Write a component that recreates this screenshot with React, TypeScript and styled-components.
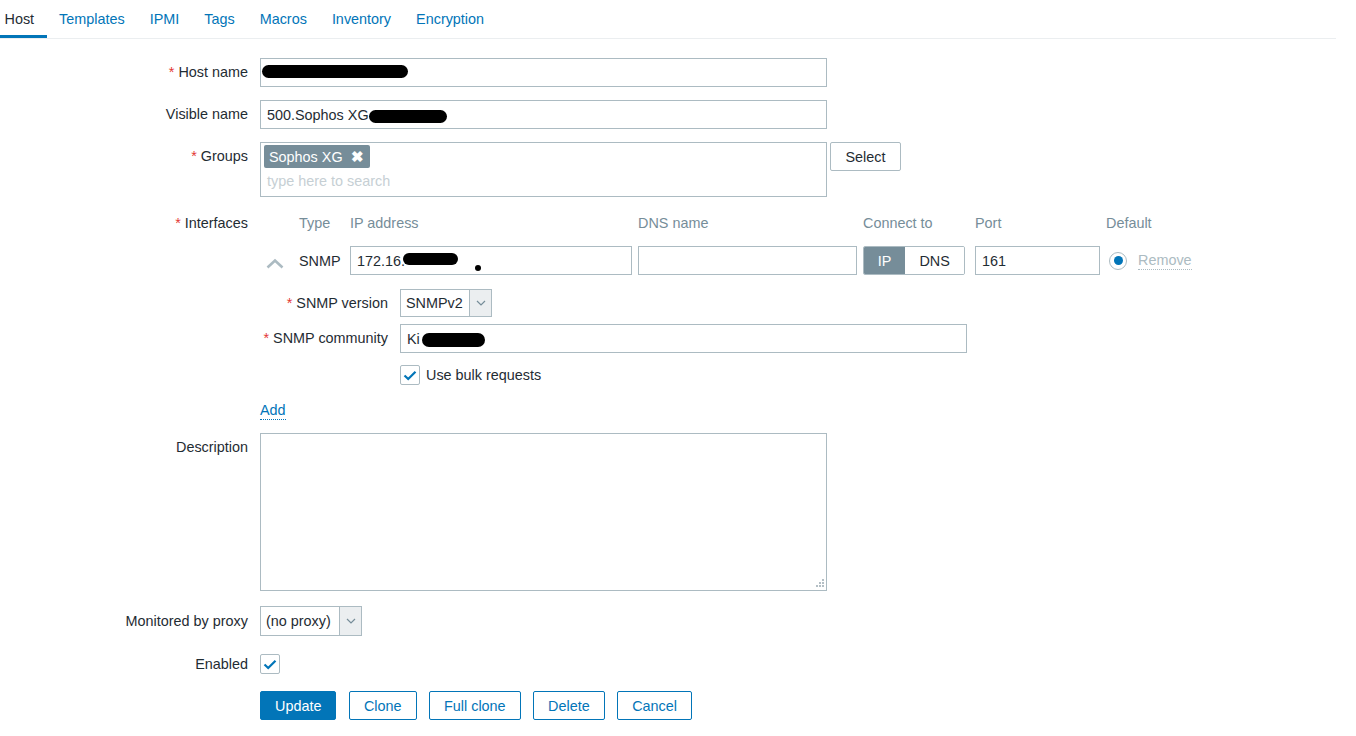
import React from "react";
import styled, { createGlobalStyle, css } from "styled-components";

const GlobalStyle = createGlobalStyle`
  html, body { margin: 0; padding: 0; background: #ffffff; }
  body {
    font-family: "Liberation Sans", Arial, sans-serif;
    font-size: 14.4px;
    color: #1f2c33;
  }
  * { box-sizing: border-box; }
`;

const Page = styled.div`
  width: 1356px;
  padding-right: 20px;
`;

const TabBar = styled.nav`
  display: flex;
  height: 39px;
  border-bottom: 1px solid #ebeef0;
  overflow: hidden;
`;

const TabList = styled.div`
  display: flex;
  margin-left: -8px;
`;

const Tab = styled.a<{ $active?: boolean }>`
  display: flex;
  align-items: center;
  height: 38px;
  padding: 0 12.5px;
  color: ${(p) => (p.$active ? "#1f2c33" : "#0275b8")};
  text-decoration: none;
  position: relative;
  cursor: pointer;
  ${(p) =>
    p.$active &&
    css`
      border-bottom: 3px solid #0275b8;
      padding-top: 3px;
    `}
`;

const Form = styled.div`
  display: flex;
  flex-direction: column;
  padding-top: 19px;
`;

const Row = styled.div<{ $mb?: number }>`
  display: grid;
  grid-template-columns: 248px 1fr;
  column-gap: 12px;
  margin-bottom: ${(p) => p.$mb ?? 0}px;
`;

const Label = styled.div<{ $lh?: number }>`
  text-align: right;
  line-height: ${(p) => p.$lh ?? 29}px;
  white-space: nowrap;
`;

const Req = styled.span`
  color: #e33734;
  margin-right: 4px;
`;

const Field = styled.div`
  display: flex;
  align-items: flex-start;
`;

const Redactable = styled.div`
  position: relative;
  display: inline-block;
`;

const Blob = styled.span`
  position: absolute;
  background: #000;
  border-radius: 8px;
  pointer-events: none;
`;

const TextInput = styled.input<{ $w: number; $h?: number }>`
  width: ${(p) => p.$w}px;
  height: ${(p) => p.$h ?? 29}px;
  border: 1px solid #acbbc2;
  border-radius: 0;
  padding: 0 6px;
  font: inherit;
  color: #1f2c33;
  background: #fff;
  outline: none;
  display: block;
`;

const MultiSelect = styled.div`
  width: 567px;
  height: 55px;
  border: 1px solid #acbbc2;
  padding: 2px 3px;
  display: flex;
  flex-direction: column;
  gap: 2px;
`;

const Chip = styled.span`
  display: inline-flex;
  align-items: center;
  align-self: flex-start;
  height: 23px;
  background: #768d99;
  color: #fff;
  border-radius: 2px;
  padding: 0 6px 0 5px;
  gap: 8px;
`;

const ChipX = styled.span`
  font-weight: bold;
  font-size: 15px;
  line-height: 1;
`;

const Placeholder = styled.span`
  color: #c6cfd4;
  padding-left: 3px;
  line-height: 23px;
`;

const PlainButton = styled.button<{ $w: number }>`
  width: ${(p) => p.$w}px;
  height: 29px;
  border: 1px solid #acbbc2;
  border-radius: 2px;
  background: #fff;
  font: inherit;
  color: #1f2c33;
  margin-left: 3px;
  padding: 0;
`;

const IfaceWrap = styled.div`
  display: flex;
  flex-direction: column;
`;

const IfaceGrid = styled.div`
  display: grid;
  grid-template-columns: 39px 51px 288px 225px 112px 131px 1fr;
  grid-template-rows: 22px 29px;
  row-gap: 12px;
  align-items: center;
`;

const Head = styled.div`
  color: #768d99;
  line-height: 22px;
`;

const CaretCell = styled.div`
  display: flex;
  padding-left: 6px;
  padding-top: 5px;
`;

const Segmented = styled.div`
  display: flex;
  width: 102px;
  height: 29px;
  border: 1px solid #acbbc2;
  border-radius: 2px;
  overflow: hidden;
`;

const Segment = styled.span<{ $active?: boolean; $w: number }>`
  width: ${(p) => p.$w}px;
  display: flex;
  align-items: center;
  justify-content: center;
  background: ${(p) => (p.$active ? "#768d99" : "#fff")};
  color: ${(p) => (p.$active ? "#fff" : "#1f2c33")};
`;

const DefaultCell = styled.div`
  display: flex;
  align-items: center;
  padding-left: 3px;
  gap: 11px;
`;

const Radio = styled.span`
  width: 18px;
  height: 18px;
  border-radius: 50%;
  border: 1px solid #acbbc2;
  display: flex;
  align-items: center;
  justify-content: center;
  &::after {
    content: "";
    width: 9px;
    height: 9px;
    border-radius: 50%;
    background: #0275b8;
  }
`;

const DottedLink = styled.a<{ $muted?: boolean }>`
  color: ${(p) => (p.$muted ? "#acbbc2" : "#0275b8")};
  text-decoration: none;
  border-bottom: 1px dotted ${(p) => (p.$muted ? "#acbbc2" : "#0275b8")};
  line-height: 18px;
  cursor: pointer;
`;

const SubRow = styled.div<{ $mt: number }>`
  display: grid;
  grid-template-columns: 128px 1fr;
  column-gap: 12px;
  margin-top: ${(p) => p.$mt}px;
`;

const Select = styled.div<{ $w: number; $h: number }>`
  width: ${(p) => p.$w}px;
  height: ${(p) => p.$h}px;
  border: 1px solid #acbbc2;
  display: flex;
  background: #fff;
`;

const SelectText = styled.span`
  flex: 1;
  display: flex;
  align-items: center;
  padding-left: 5px;
  white-space: nowrap;
`;

const SelectArrow = styled.span`
  width: 22px;
  background: #ebeef0;
  border-left: 1px solid #acbbc2;
  display: flex;
  align-items: center;
  justify-content: center;
`;

const CheckLine = styled.div<{ $mt?: number; $pl?: number }>`
  display: flex;
  align-items: center;
  gap: 6px;
  margin-top: ${(p) => p.$mt ?? 0}px;
  padding-left: ${(p) => p.$pl ?? 0}px;
  height: 20px;
`;

const Checkbox = styled.span`
  width: 20px;
  height: 20px;
  border: 1px solid #acbbc2;
  border-radius: 2px;
  background: #fff;
  display: flex;
  align-items: center;
  justify-content: center;
`;

const AddLine = styled.div`
  margin-top: 15px;
  height: 20px;
  display: flex;
  align-items: center;
`;

const TextAreaBox = styled.div`
  position: relative;
  width: 567px;
  height: 158px;
`;

const TextArea = styled.textarea`
  width: 100%;
  height: 100%;
  border: 1px solid #acbbc2;
  resize: none;
  font: inherit;
  outline: none;
  display: block;
`;

const Grip = styled.svg`
  position: absolute;
  right: 3px;
  bottom: 3px;
`;

const Buttons = styled.div`
  display: flex;
  gap: 12.5px;
`;

const Btn = styled.button<{ $primary?: boolean }>`
  height: 29px;
  padding: 0 14px;
  border: 1px solid #0275b8;
  border-radius: 2px;
  background: ${(p) => (p.$primary ? "#0275b8" : "#fff")};
  color: ${(p) => (p.$primary ? "#fff" : "#0275b8")};
  font: inherit;
  cursor: pointer;
`;

const CheckIcon = () => (
  <svg width="14" height="11" viewBox="0 0 14 11">
    <path d="M1.5 5.5 L5.2 9 L12.5 1.8" fill="none" stroke="#0275b8" strokeWidth="2.2" />
  </svg>
);

const ChevronDown = () => (
  <svg width="10" height="6" viewBox="0 0 10 6">
    <path d="M1 1 L5 5 L9 1" fill="none" stroke="#768d99" strokeWidth="1.2" />
  </svg>
);

const ChevronUp = () => (
  <svg width="18" height="11" viewBox="0 0 18 11">
    <path d="M1.5 9.5 L9 2.5 L16.5 9.5" fill="none" stroke="#acbbc2" strokeWidth="2.6" />
  </svg>
);

const tabs = ["Host", "Templates", "IPMI", "Tags", "Macros", "Inventory", "Encryption"];

export default function App() {
  return (
    <Page>
      <GlobalStyle />
      <TabBar>
        <TabList>
          {tabs.map((t, i) => (
            <Tab key={t} $active={i === 0}>
              {t}
            </Tab>
          ))}
        </TabList>
      </TabBar>
      <Form>
        <Row $mb={13}>
          <Label>
            <Req>*</Req>Host name
          </Label>
          <Field>
            <Redactable>
              <TextInput $w={567} defaultValue="" />
              <Blob style={{ left: 2, top: 7, width: 146, height: 13 }} />
            </Redactable>
          </Field>
        </Row>
        <Row $mb={13}>
          <Label>Visible name</Label>
          <Field>
            <Redactable>
              <TextInput $w={567} defaultValue="500.Sophos XG" />
              <Blob style={{ left: 109, top: 10, width: 78, height: 13 }} />
            </Redactable>
          </Field>
        </Row>
        <Row $mb={15}>
          <Label $lh={29}>
            <Req>*</Req>Groups
          </Label>
          <Field>
            <MultiSelect>
              <Chip>
                Sophos XG <ChipX>✖</ChipX>
              </Chip>
              <Placeholder>type here to search</Placeholder>
            </MultiSelect>
            <PlainButton $w={71}>Select</PlainButton>
          </Field>
        </Row>
        <Row $mb={13}>
          <Label $lh={22}>
            <Req>*</Req>Interfaces
          </Label>
          <IfaceWrap>
            <IfaceGrid>
              <span />
              <Head>Type</Head>
              <Head>IP address</Head>
              <Head>DNS name</Head>
              <Head>Connect to</Head>
              <Head>Port</Head>
              <Head>Default</Head>
              <CaretCell>
                <ChevronUp />
              </CaretCell>
              <span>SNMP</span>
              <Redactable>
                <TextInput $w={282} defaultValue="172.16." />
                <Blob style={{ left: 53, top: 7, width: 55, height: 12 }} />
                <Blob style={{ left: 125, top: 19, width: 6, height: 6, borderRadius: 3 }} />
              </Redactable>
              <TextInput $w={219} defaultValue="" />
              <Segmented>
                <Segment $active $w={42}>
                  IP
                </Segment>
                <Segment $w={60}>DNS</Segment>
              </Segmented>
              <TextInput $w={125} defaultValue="161" />
              <DefaultCell>
                <Radio />
                <DottedLink $muted>Remove</DottedLink>
              </DefaultCell>
            </IfaceGrid>
            <SubRow $mt={14}>
              <Label $lh={28}>
                <Req>*</Req>SNMP version
              </Label>
              <Field>
                <Select $w={92} $h={28}>
                  <SelectText>SNMPv2</SelectText>
                  <SelectArrow>
                    <ChevronDown />
                  </SelectArrow>
                </Select>
              </Field>
            </SubRow>
            <SubRow $mt={7}>
              <Label>
                <Req>*</Req>SNMP community
              </Label>
              <Field>
                <Redactable>
                  <TextInput $w={567} defaultValue="Ki" />
                  <Blob style={{ left: 22, top: 9, width: 63, height: 14 }} />
                </Redactable>
              </Field>
            </SubRow>
            <SubRow $mt={12}>
              <span />
              <CheckLine>
                <Checkbox>
                  <CheckIcon />
                </Checkbox>
                <span>Use bulk requests</span>
              </CheckLine>
            </SubRow>
            <AddLine>
              <DottedLink>Add</DottedLink>
            </AddLine>
          </IfaceWrap>
        </Row>
        <Row $mb={15}>
          <Label>Description</Label>
          <Field>
            <TextAreaBox>
              <TextArea />
              <Grip width="10" height="10" viewBox="0 0 10 10">
                {[
                  [8, 0],
                  [5, 3],
                  [8, 3],
                  [2, 6],
                  [5, 6],
                  [8, 6],
                ].map(([x, y]) => (
                  <rect key={`${x}-${y}`} x={x} y={y + 1} width="2" height="2" fill="#b4bfc5" />
                ))}
              </Grip>
            </TextAreaBox>
          </Field>
        </Row>
        <Row $mb={18}>
          <Label $lh={30}>Monitored by proxy</Label>
          <Field>
            <Select $w={102} $h={30}>
              <SelectText>(no proxy)</SelectText>
              <SelectArrow>
                <ChevronDown />
              </SelectArrow>
            </Select>
          </Field>
        </Row>
        <Row $mb={17}>
          <Label $lh={20}>Enabled</Label>
          <CheckLine>
            <Checkbox>
              <CheckIcon />
            </Checkbox>
          </CheckLine>
        </Row>
        <Row>
          <span />
          <Buttons>
            <Btn $primary>Update</Btn>
            <Btn>Clone</Btn>
            <Btn>Full clone</Btn>
            <Btn>Delete</Btn>
            <Btn>Cancel</Btn>
          </Buttons>
        </Row>
      </Form>
    </Page>
  );
}
